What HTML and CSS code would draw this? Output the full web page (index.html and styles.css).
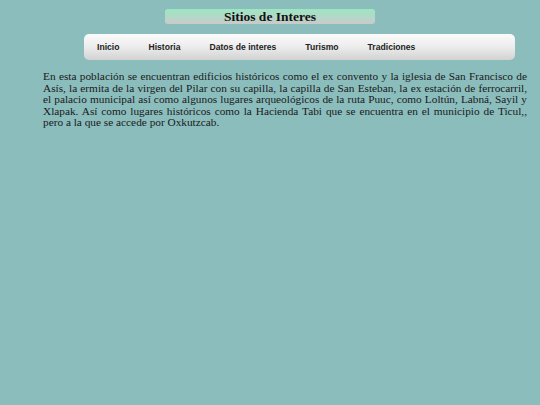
FILE: index.html
```html
<!DOCTYPE html>
<html lang="es">
<head>
<meta charset="utf-8">
<title>Sitios de Interes</title>
<link rel="stylesheet" href="styles.css">
</head>
<body>
<header class="header">
  <h1 class="title">Sitios de Interes</h1>
  <nav class="nav">
    <a class="nav-item" href="#">Inicio</a>
    <a class="nav-item" href="#">Historia</a>
    <a class="nav-item" href="#">Datos de interes</a>
    <a class="nav-item" href="#">Turismo</a>
    <a class="nav-item" href="#">Tradiciones</a>
  </nav>
</header>
<main class="content">
  <p class="text">En esta población se encuentran edificios históricos como el ex convento y la iglesia de San Francisco de Asís, la ermita de la virgen del Pilar con su capilla, la capilla de San Esteban, la ex estación de ferrocarril, el palacio municipal así como algunos lugares arqueológicos de la ruta Puuc, como Loltún, Labná, Sayil y Xlapak. Así como lugares históricos como la Hacienda Tabi que se encuentra en el municipio de Ticul,, pero a la que se accede por Oxkutzcab.</p>
</main>
</body>
</html>
```
FILE: styles.css
```css
html, body {
  margin: 0;
  padding: 0;
  background: #8bbdbd;
}
body {
  width: 540px;
  height: 405px;
  font-family: "Liberation Serif", "Times New Roman", serif;
  color: #111;
}
.header {
  padding-top: 9px;
}
.title {
  margin: 0 auto;
  width: 210px;
  height: 15px;
  line-height: 15px;
  font-size: 13.5px;
  font-weight: bold;
  text-align: center;
  color: #111;
  border-radius: 3px;
  background: linear-gradient(to bottom, #9de6c2 0%, #b3d8c8 55%, #cacaca 100%);
}
.nav {
  margin: 10px 0 0 84px;
  width: 431px;
  height: 26px;
  box-sizing: border-box;
  padding-left: 13px;
  display: flex;
  align-items: center;
  gap: 29px;
  border-radius: 5px;
  background: linear-gradient(to bottom, #fbfbfb 0%, #ececec 50%, #d2d2d2 100%);
}
.nav-item {
  font-family: "Liberation Sans", Arial, sans-serif;
  font-size: 8.6px;
  font-weight: bold;
  color: #222;
  text-decoration: none;
}
.content {
  padding: 11px 13px 0 43px;
}
.text {
  margin: 0;
  font-size: 11.3px;
  line-height: 11.5px;
  text-align: justify;
  color: #1a1a1a;
}
```
